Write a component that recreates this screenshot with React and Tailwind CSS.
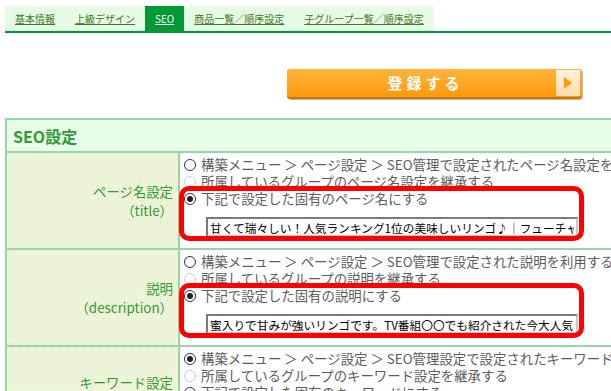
import React from 'react';

const tabs = ['基本情報', '上級デザイン', 'SEO', '商品一覧／順序設定', '子グループ一覧／順序設定'];

const Radio = ({ checked, disabled }) => (
  <span
    className={
      disabled
        ? 'inline-flex w-[12px] h-[12px] shrink-0 rounded-full border border-[#cfcfcf] bg-white'
        : 'inline-flex w-[12px] h-[12px] shrink-0 items-center justify-center rounded-full border border-[#333] bg-white'
    }
  >
    {checked && <span className="w-[6px] h-[6px] rounded-full bg-[#222]" />}
  </span>
);

const Option = ({ checked, disabled, children }) => (
  <div className="flex items-center gap-[5px] h-[17px] whitespace-nowrap">
    <Radio checked={checked} disabled={disabled} />
    <span>{children}</span>
  </div>
);

const Highlighted = ({ label, value }) => (
  <div className="relative">
    <Option checked>{label}</Option>
    <input
      readOnly
      value={value}
      className="block mt-[10px] ml-[22px] w-[372px] h-[20px] px-[2px] border-2 border-t-[#7a7a7a] border-l-[#7a7a7a] border-r-[#c8c8c8] border-b-[#c8c8c8] bg-white text-[11.7px] text-black outline-none"
    />
    <div className="pointer-events-none absolute -top-[4px] -left-[5px] -bottom-[4px] w-[405px] rounded-[10px] border-[5px] border-[#ff0000]" />
  </div>
);

const Label = ({ children }) => (
  <td className="w-[173px] border-2 border-[#97d7a5] pr-[5px] text-right align-middle text-[13.4px] leading-[19px] text-[#339933] bg-[repeating-conic-gradient(#e3f2c6_0_25%,#f6fbea_0_50%)] bg-[length:2px_2px]">
    {children}
  </td>
);

export default function App() {
  return (
    <div className="w-[611px] h-[391px] overflow-hidden bg-white pt-[6px] pl-[5px] font-['Noto_Sans_CJK_JP',sans-serif]">
      <div className="flex border-b-2 border-[#009933]">
        {tabs.map((t) => (
          <a
            key={t}
            className={
              t === 'SEO'
                ? 'flex items-center h-[25px] px-[10px] text-[10px] underline bg-[#009933] text-white'
                : 'flex items-center h-[25px] px-[10px] text-[10px] underline bg-[#e6fbe6] text-[#447722]'
            }
          >
            {t}
          </a>
        ))}
      </div>

      <div className="mt-[36px] ml-[282px]">
        <button className="flex w-[295px] h-[30px] rounded-[3px] border-b-2 border-[#c77700] bg-gradient-to-b from-[#ffb43a] to-[#ff9900] shadow-[1px_1px_0_#b8b8b8]">
          <span className="flex-1 flex items-center justify-center pl-[8px] text-[15px] font-bold tracking-[4px] text-white">
            登録する
          </span>
          <span className="flex items-center justify-center w-[24px] my-[1px] mr-[2px] bg-gradient-to-b from-[#fff1dc] to-[#ffdcac]">
            <span className="w-0 h-0 border-y-[6px] border-y-transparent border-l-[8px] border-l-[#ff9900]" />
          </span>
        </button>
      </div>

      <table className="mt-[19px] w-[800px] border-collapse">
        <tbody>
          <tr>
            <th
              colSpan={2}
              className="h-[33px] border-2 border-[#97d7a5] bg-[#e8fde8] pl-[6px] text-left text-[16px] font-bold text-[#2f9a36]"
            >
              SEO設定
            </th>
          </tr>
          <tr>
            <Label>
              ページ名設定
              <br />
              （title）
            </Label>
            <td className="border-2 border-[#97d7a5] pl-[4px] pt-[3px] pb-[11px] align-top text-[13.4px] text-[#5c5c5c]">
              <Option>構築メニュー ＞ ページ設定 ＞ SEO管理で設定されたページ名設定を利用する</Option>
              <Option disabled>所属しているグループのページ名設定を継承する</Option>
              <Highlighted
                label="下記で設定した固有のページ名にする"
                value="甘くて瑞々しい！人気ランキング1位の美味しいリンゴ♪｜フューチャーショップ"
              />
            </td>
          </tr>
          <tr>
            <Label>
              説明
              <br />
              （description）
            </Label>
            <td className="border-2 border-[#97d7a5] pl-[4px] pt-[3px] pb-[11px] align-top text-[13.4px] text-[#5c5c5c]">
              <Option>構築メニュー ＞ ページ設定 ＞ SEO管理で設定された説明を利用する</Option>
              <Option disabled>所属しているグループの説明を継承する</Option>
              <Highlighted
                label="下記で設定した固有の説明にする"
                value="蜜入りで甘みが強いリンゴです。TV番組〇〇でも紹介された今大人気のリンゴ"
              />
            </td>
          </tr>
          <tr>
            <Label>キーワード設定</Label>
            <td className="border-2 border-[#97d7a5] pl-[4px] pt-[3px] pb-[16px] align-top text-[13.4px] text-[#5c5c5c]">
              <Option checked>構築メニュー ＞ ページ設定 ＞ SEO管理設定で設定されたキーワード設定を利用する</Option>
              <Option disabled>所属しているグループのキーワード設定を継承する</Option>
              <Option>下記で設定した固有のキーワードにする</Option>
            </td>
          </tr>
        </tbody>
      </table>
    </div>
  );
}
